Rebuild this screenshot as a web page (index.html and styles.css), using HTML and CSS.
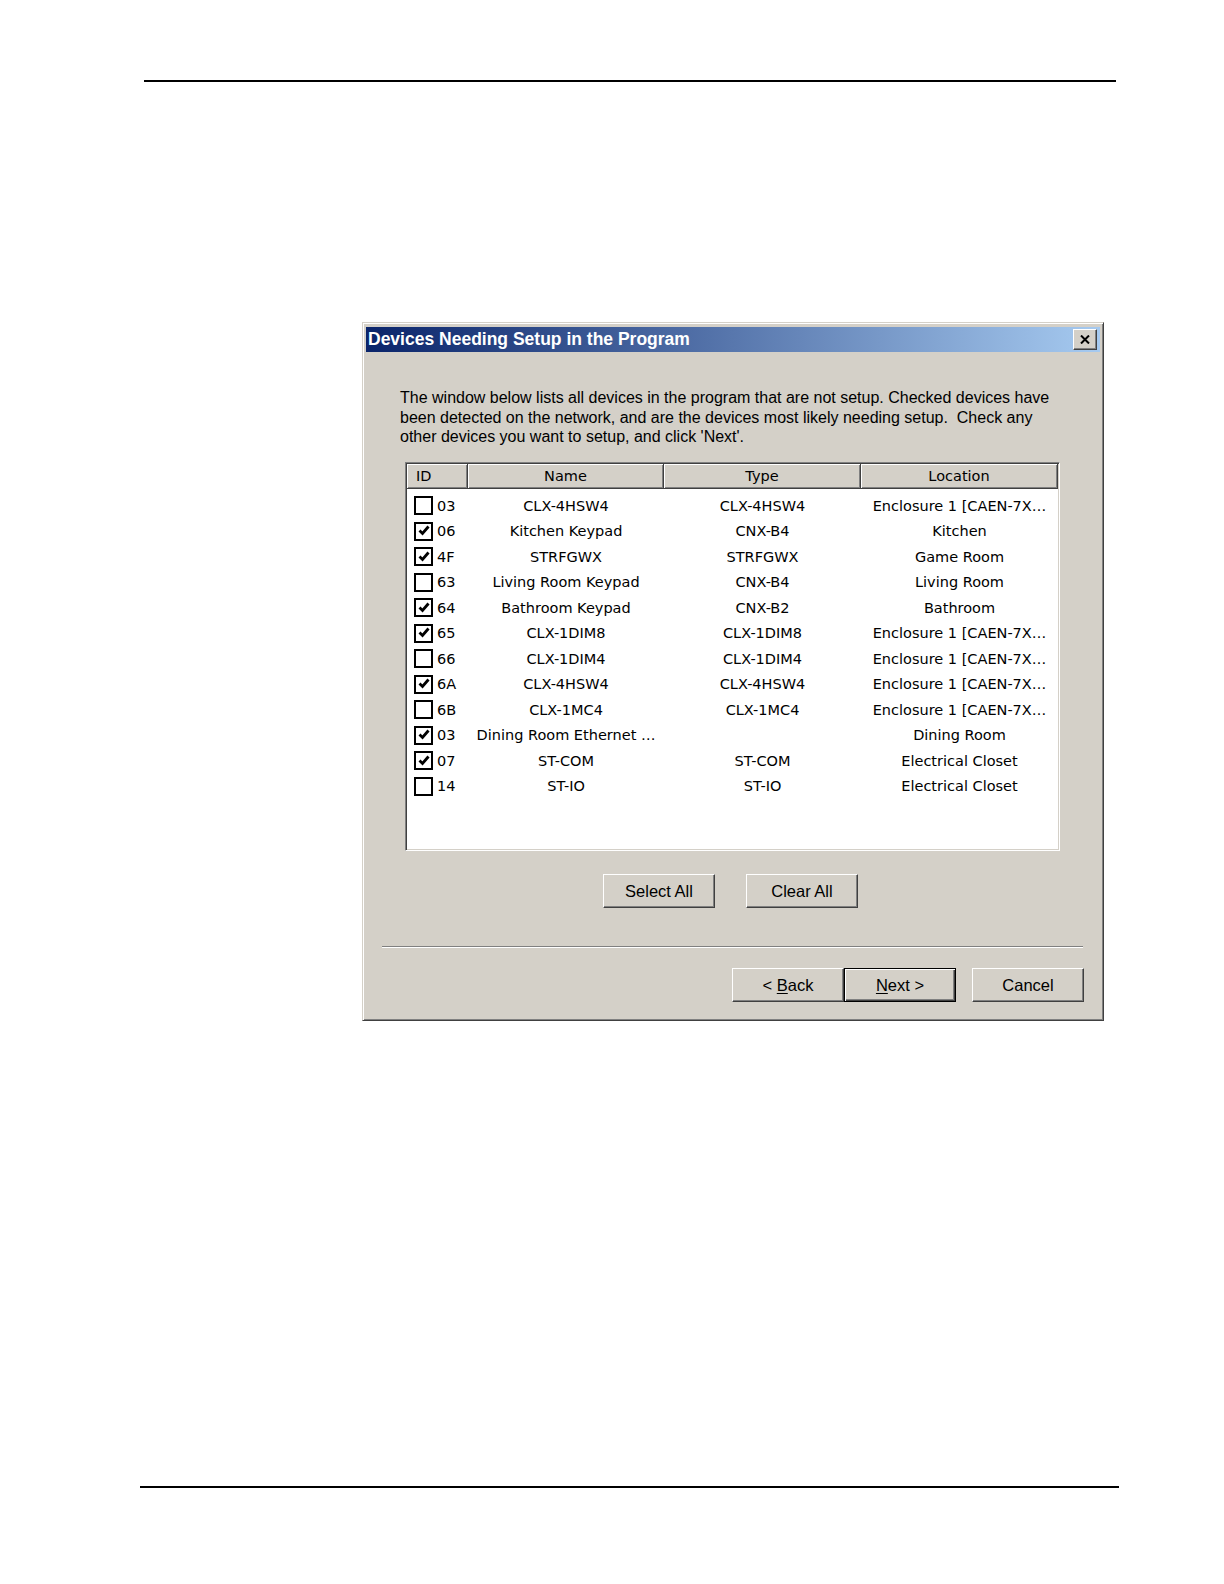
FILE: index.html
```html
<!DOCTYPE html>
<html lang="en">
  <head>
    <meta charset="UTF-8" />
    <title>Devices Needing Setup in the Program</title>
    <link rel="stylesheet" href="styles.css">
  </head>
  <body>
    <div class="rule-top"></div>

    <div class="dialog">
      <div class="titlebar">
        <span class="title">Devices Needing Setup in the Program</span>
        <span class="close">
          <svg width="10" height="9" viewBox="0 0 10 9"><path d="M1 0.5 L9 8.5 M9 0.5 L1 8.5" stroke="#000" stroke-width="2"/></svg>
        </span>
      </div>

      <p class="intro">The window below lists all devices in the program that are not setup. Checked devices have<br>been detected on the network, and are the devices most likely needing setup.&nbsp; Check any<br>other devices you want to setup, and click 'Next'.</p>

      <div class="list">
        <div class="list-head">
          <div class="col col-id">ID</div>
          <div class="col">Name</div>
          <div class="col">Type</div>
          <div class="col">Location</div>
        </div>
        <div class="rows">
          <div class="row"><div class="id"><span class="box"></span>03</div><div>CLX-4HSW4</div><div>CLX-4HSW4</div><div>Enclosure 1 [CAEN-7X…</div></div>
          <div class="row"><div class="id"><span class="box"><svg width="14" height="14" viewBox="0 0 14 14"><path d="M2.5 6.5 L5.5 9.5 L11.5 2.5" fill="none" stroke="#000" stroke-width="2.8"/></svg></span>06</div><div>Kitchen Keypad</div><div>CNX-B4</div><div>Kitchen</div></div>
          <div class="row"><div class="id"><span class="box"><svg width="14" height="14" viewBox="0 0 14 14"><path d="M2.5 6.5 L5.5 9.5 L11.5 2.5" fill="none" stroke="#000" stroke-width="2.8"/></svg></span>4F</div><div>STRFGWX</div><div>STRFGWX</div><div>Game Room</div></div>
          <div class="row"><div class="id"><span class="box"></span>63</div><div>Living Room Keypad</div><div>CNX-B4</div><div>Living Room</div></div>
          <div class="row"><div class="id"><span class="box"><svg width="14" height="14" viewBox="0 0 14 14"><path d="M2.5 6.5 L5.5 9.5 L11.5 2.5" fill="none" stroke="#000" stroke-width="2.8"/></svg></span>64</div><div>Bathroom Keypad</div><div>CNX-B2</div><div>Bathroom</div></div>
          <div class="row"><div class="id"><span class="box"><svg width="14" height="14" viewBox="0 0 14 14"><path d="M2.5 6.5 L5.5 9.5 L11.5 2.5" fill="none" stroke="#000" stroke-width="2.8"/></svg></span>65</div><div>CLX-1DIM8</div><div>CLX-1DIM8</div><div>Enclosure 1 [CAEN-7X…</div></div>
          <div class="row"><div class="id"><span class="box"></span>66</div><div>CLX-1DIM4</div><div>CLX-1DIM4</div><div>Enclosure 1 [CAEN-7X…</div></div>
          <div class="row"><div class="id"><span class="box"><svg width="14" height="14" viewBox="0 0 14 14"><path d="M2.5 6.5 L5.5 9.5 L11.5 2.5" fill="none" stroke="#000" stroke-width="2.8"/></svg></span>6A</div><div>CLX-4HSW4</div><div>CLX-4HSW4</div><div>Enclosure 1 [CAEN-7X…</div></div>
          <div class="row"><div class="id"><span class="box"></span>6B</div><div>CLX-1MC4</div><div>CLX-1MC4</div><div>Enclosure 1 [CAEN-7X…</div></div>
          <div class="row"><div class="id"><span class="box"><svg width="14" height="14" viewBox="0 0 14 14"><path d="M2.5 6.5 L5.5 9.5 L11.5 2.5" fill="none" stroke="#000" stroke-width="2.8"/></svg></span>03</div><div>Dining Room Ethernet …</div><div></div><div>Dining Room</div></div>
          <div class="row"><div class="id"><span class="box"><svg width="14" height="14" viewBox="0 0 14 14"><path d="M2.5 6.5 L5.5 9.5 L11.5 2.5" fill="none" stroke="#000" stroke-width="2.8"/></svg></span>07</div><div>ST-COM</div><div>ST-COM</div><div>Electrical Closet</div></div>
          <div class="row"><div class="id"><span class="box"></span>14</div><div>ST-IO</div><div>ST-IO</div><div>Electrical Closet</div></div>
        </div>
      </div>

      <div class="select-row">
        <button class="btn">Select All</button>
        <button class="btn">Clear All</button>
      </div>

      <div class="separator"></div>

      <div class="footer">
        <button class="btn">&lt; <u>B</u>ack</button>
        <button class="btn btn-default"><u>N</u>ext &gt;</button>
        <button class="btn btn-cancel">Cancel</button>
      </div>
    </div>

    <div class="rule-bottom"></div>
  </body>
</html>
```

FILE: styles.css
```css
body {
  margin: 0;
  background: #fff;
  font-family: "Liberation Sans", Arial, sans-serif;
  color: #000;
}

.rule-top {
  margin: 80px 0 0 144px;
  width: 972px;
  height: 2px;
  background: #000;
}

.rule-bottom {
  margin: 465px 0 0 140px;
  width: 979px;
  height: 2px;
  background: #000;
}

.dialog {
  margin: 240px 0 0 362px;
  width: 742px;
  height: 699px;
  box-sizing: border-box;
  padding: 4px 3px 3px;
  background: #d4d0c8;
  border: 1px solid;
  border-color: #d4d0c8 #404040 #404040 #d4d0c8;
  box-shadow: inset 1px 1px #fff, inset -1px -1px #808080;
}

.titlebar {
  height: 25px;
  display: flex;
  align-items: center;
  justify-content: space-between;
  padding: 0 3px 0 2px;
  background: linear-gradient(to right, #0a246a, #a6caf0);
}

.title {
  color: #fff;
  font-weight: bold;
  font-size: 17.5px;
}

.close {
  width: 24px;
  height: 21px;
  box-sizing: border-box;
  display: flex;
  align-items: center;
  justify-content: center;
  background: #d4d0c8;
  border: 1px solid;
  border-color: #fff #404040 #404040 #fff;
  box-shadow: inset -1px -1px #808080;
}

.intro {
  margin: 36px 0 0 34px;
  font-size: 16px;
  line-height: 19.7px;
}

.list {
  margin: 15px 0 0 39px;
  width: 655px;
  height: 389px;
  box-sizing: border-box;
  background: #fff;
  border: 1px solid;
  border-color: #808080 #fff #fff #808080;
  box-shadow: inset 1px 1px #404040, inset -1px -1px #d4d0c8;
  padding: 1px;
  font-family: "DejaVu Sans", Verdana, sans-serif;
  font-size: 14.5px;
}

.list-head {
  display: grid;
  grid-template-columns: 61px 196px 197px 197px;
  height: 25px;
}

.col {
  background: #d4d0c8;
  text-align: center;
  line-height: 24px;
  border-right: 1px solid #404040;
  border-bottom: 1px solid #404040;
  box-shadow: inset 1px 1px #fff, inset -1px -1px #808080;
}

.col-id {
  text-align: left;
  padding-left: 9px;
}

.rows {
  padding-top: 4px;
}

.row {
  display: grid;
  grid-template-columns: 61px 196px 197px 197px;
  height: 25.5px;
  align-items: center;
  text-align: center;
  white-space: nowrap;
}

.id {
  display: flex;
  align-items: center;
  gap: 4px;
  padding-left: 7px;
  text-align: left;
}

.box {
  width: 19px;
  height: 19px;
  box-sizing: border-box;
  border: 2px solid #000;
  display: flex;
  align-items: center;
  justify-content: center;
  background: #fff;
}

.btn {
  width: 112px;
  height: 34px;
  box-sizing: border-box;
  background: #d4d0c8;
  border: 1px solid;
  border-color: #fff #404040 #404040 #fff;
  box-shadow: inset -1px -1px #808080;
  font-family: "Liberation Sans", Arial, sans-serif;
  font-size: 16.5px;
  color: #000;
  padding: 0;
}

.btn u {
  text-underline-offset: 2px;
}

.btn-default {
  border: 1px solid #000;
  box-shadow: inset 1px 1px #fff, inset -1px -1px #404040, inset -2px -2px #808080;
}

.select-row {
  display: flex;
  gap: 31px;
  margin-top: 23px;
  padding-left: 237px;
}

.separator {
  margin: 38px 0 0 16px;
  width: 701px;
  border-top: 1px solid #808080;
  border-bottom: 1px solid #fff;
}

.footer {
  display: flex;
  justify-content: flex-end;
  margin-top: 20px;
  padding-right: 16px;
}

.btn-cancel {
  margin-left: 16px;
}
```
